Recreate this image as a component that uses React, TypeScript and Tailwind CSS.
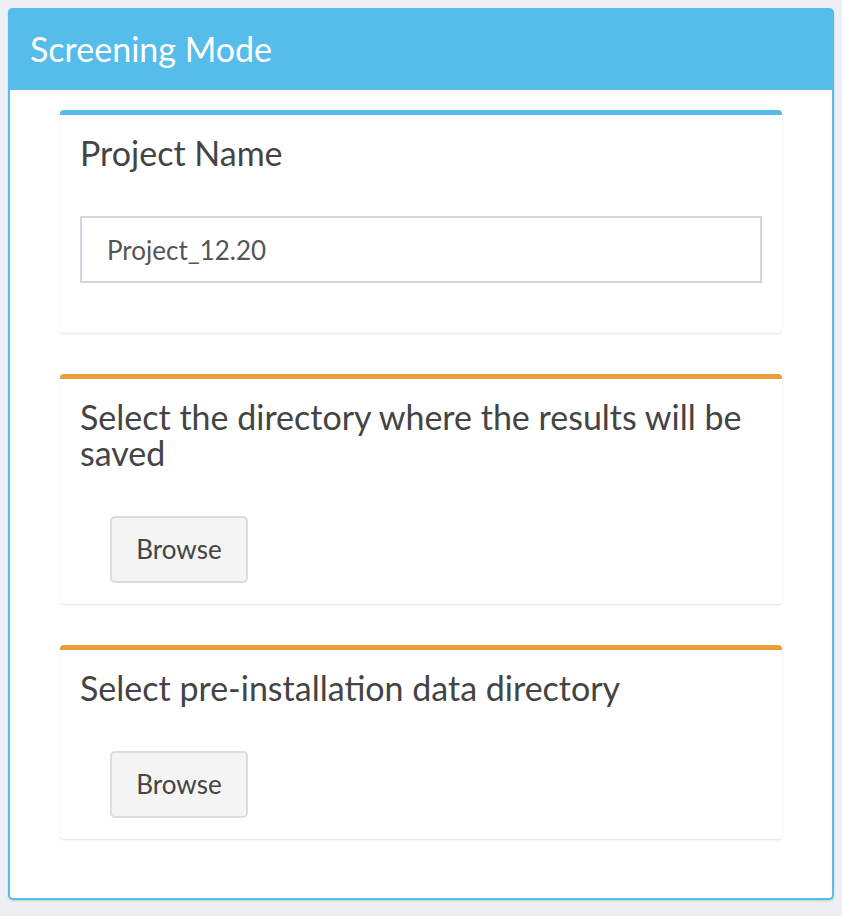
export default function App() {
  return (
    <main className="min-h-screen bg-[#ecf0f5] p-2 font-['Lato','Liberation_Sans',sans-serif]">
      {/* Screening box */}
      <div className="rounded-[5px] border-2 border-t-0 border-[#56bdea] bg-white shadow-[0_1px_2px_rgba(0,0,0,0.15)]">
        <div className="-mx-[2px] flex h-[82px] items-center rounded-t-[5px] bg-[#56bdea] pl-[22px]">
          <h2 className="text-[34px] leading-[36px] text-white">Screening Mode</h2>
        </div>

        <div className="flex flex-col gap-[41px] px-[50px] pt-[20px] pb-[59px]">
          {/* Project name */}
          <section className="rounded-[4px] border-t-[5px] border-[#56bdea] bg-white px-5 pt-[20px] pb-[50px] shadow-[0_1px_2px_rgba(0,0,0,0.12)]">
            <h3 className="text-[34px] leading-[36px] text-[#444]">Project Name</h3>
            <input
              type="text"
              defaultValue="Project_12.20"
              className="mt-[45px] block h-[67px] w-full border-2 border-[#d2d6de] px-[25px] text-[26px] text-[#555] outline-none"
            />
          </section>

          {/* Results directory */}
          <section className="rounded-[4px] border-t-[5px] border-[#e89e3b] bg-white px-5 pt-[20px] pb-[21px] shadow-[0_1px_2px_rgba(0,0,0,0.12)]">
            <h3 className="text-[34px] leading-[36px] text-[#444]">
              Select the directory where the results will be saved
            </h3>
            <button className="mt-[45px] ml-[30px] h-[67px] w-[138px] rounded-[5px] border-2 border-[#dcdcdc] bg-[#f4f4f4] text-[26px] text-[#444]">
              Browse
            </button>
          </section>

          {/* Pre-installation data */}
          <section className="rounded-[4px] border-t-[5px] border-[#e89e3b] bg-white px-5 pt-[20px] pb-[21px] shadow-[0_1px_2px_rgba(0,0,0,0.12)]">
            <h3 className="text-[34px] leading-[36px] text-[#444]">Select pre-installation data directory</h3>
            <button className="mt-[45px] ml-[30px] h-[67px] w-[138px] rounded-[5px] border-2 border-[#dcdcdc] bg-[#f4f4f4] text-[26px] text-[#444]">
              Browse
            </button>
          </section>
        </div>
      </div>
    </main>
  )
}
